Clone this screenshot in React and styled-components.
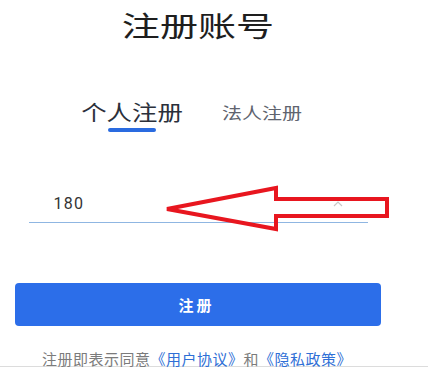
import React, { useState } from 'react';
import styled, { createGlobalStyle } from 'styled-components';

const GlobalStyle = createGlobalStyle`
  body {
    margin: 0;
    background: #ffffff;
    font-family: "Noto Sans CJK SC", "Noto Sans", sans-serif;
  }
`;

const Page = styled.div`
  position: relative;
  width: 434px;
  height: 374px;
  overflow: hidden;
  background: #fff;
`;

const Content = styled.div`
  width: 396px;
  padding-top: 11px;
  display: flex;
  flex-direction: column;
  align-items: center;
`;

// the screenshot is stretched sideways, so text is widened with scaleX
const Title = styled.h1`
  margin: 0;
  font-size: 28px;
  line-height: 1;
  font-weight: 400;
  color: #1e1e1e;
  transform: scaleX(1.36);
`;

const Tabs = styled.div`
  margin-top: 62px;
  display: flex;
  align-items: flex-start;
  gap: 56px;
  padding-right: 11px;
`;

const Tab = styled.div`
  display: flex;
  flex-direction: column;
  align-items: center;
  padding-top: ${(p) => (p.active ? '0' : '3px')};
  cursor: pointer;
`;

const TabLabel = styled.span`
  font-size: ${(p) => (p.active ? '21px' : '16px')};
  line-height: 1;
  color: ${(p) => (p.active ? '#2b303b' : '#60646f')};
  transform: scaleX(${(p) => (p.active ? 1.21 : 1.25)});
`;

const Underline = styled.span`
  margin-top: 6px;
  width: 48px;
  height: 4px;
  border-radius: 2px;
  background: #2a6be0;
  visibility: ${(p) => (p.show ? 'visible' : 'hidden')};
`;

const InputRow = styled.div`
  margin-top: 53px;
  width: 339px;
  height: 38px;
  box-sizing: border-box;
  border-bottom: 1px solid #8fb6e2;
  display: flex;
  align-items: center;
  padding: 0 25px 0 25px;
`;

const Input = styled.input`
  flex: 1;
  border: none;
  outline: none;
  background: transparent;
  font-family: Roboto, "Noto Sans", sans-serif;
  font-size: 16px;
  letter-spacing: 1.2px;
  color: #333;
  padding: 0;
`;

const Button = styled.button`
  margin-top: 60px;
  width: 366px;
  height: 43px;
  border: none;
  border-radius: 4px;
  background: #2c6ee9;
  color: #fff;
  font-family: "Noto Sans CJK SC", sans-serif;
  font-size: 15px;
  font-weight: 700;
  letter-spacing: 3px;
  padding-left: 3px;
  cursor: pointer;
`;

const Footer = styled.div`
  margin-top: 25px;
  width: 428px;
  align-self: flex-start;
  box-sizing: border-box;
  padding-left: 42px;
  font-size: 15px;
  letter-spacing: 0.5px;
  line-height: 1;
  color: #7b7b7b;
  border-bottom: 1px solid #dcdcdc;
`;

const Link = styled.a`
  color: #2f6fd6;
  text-decoration: none;
`;

const Arrow = styled.svg`
  position: absolute;
  left: 160px;
  top: 180px;
  pointer-events: none;
`;

export default function App() {
  const [tab, setTab] = useState(0);
  const [phone, setPhone] = useState('180');

  return (
    <Page>
      <GlobalStyle />
      <Content>
        <Title>注册账号</Title>
        <Tabs>
          {['个人注册', '法人注册'].map((t, i) => (
            <Tab key={t} active={tab === i} onClick={() => setTab(i)}>
              <TabLabel active={i === 0}>{t}</TabLabel>
              <Underline show={tab === i} />
            </Tab>
          ))}
        </Tabs>
        <InputRow>
          <Input value={phone} onChange={(e) => setPhone(e.target.value)} />
          <svg width="10" height="6" viewBox="0 0 10 6">
            <polyline points="1,5 5,1 9,5" fill="none" stroke="#c8c8c8" strokeWidth="1.2" />
          </svg>
        </InputRow>
        <Button>注册</Button>
        <Footer>
          注册即表示同意<Link>《用户协议》</Link>和<Link>《隐私政策》</Link>
        </Footer>
      </Content>
      <Arrow width="232" height="54" viewBox="0 0 232 54">
        <polygon
          points="7,29 116,8 116,19 227,19 227,36 116,36 116,49"
          fill="none"
          stroke="#e8161f"
          strokeWidth="4"
          strokeLinejoin="miter"
        />
      </Arrow>
    </Page>
  );
}
